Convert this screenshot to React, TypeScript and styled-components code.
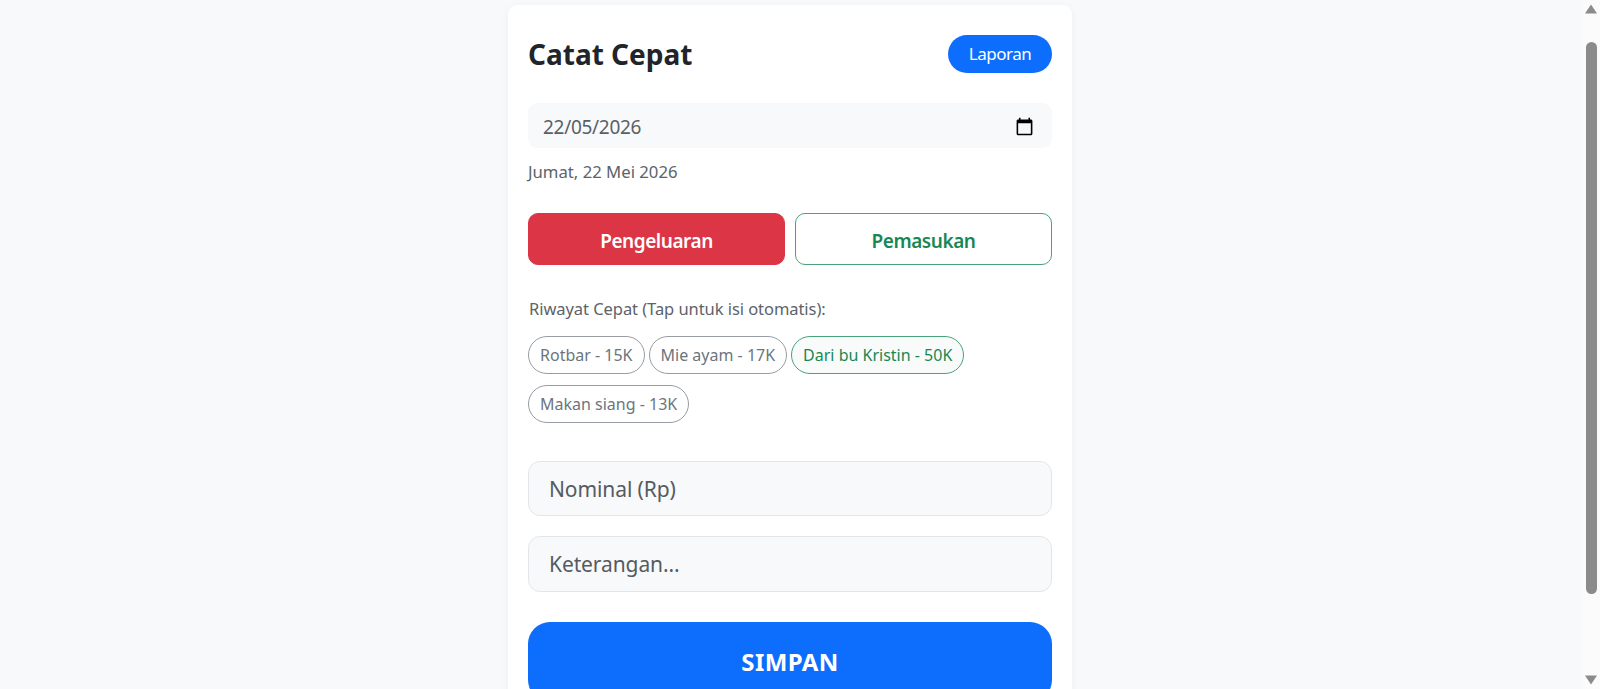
import * as React from 'react'
import styled, { createGlobalStyle } from 'styled-components'

const Global = createGlobalStyle`
  html, body {
    margin: 0;
    height: 100%;
    overflow: hidden;
    background: #f8f9fa;
    font-family: "Noto Sans", "Open Sans", sans-serif;
    color: #212529;
  }
  * { box-sizing: border-box; }
`

const Page = styled.div`
  display: flex;
  height: 100vh;
  overflow: hidden;
`

const Main = styled.main`
  flex: 1;
  display: flex;
  justify-content: center;
  padding: 5px 2px 0 0;
  overflow: hidden;
`

const Card = styled.div`
  width: 564px;
  height: 760px;
  flex: none;
  padding: 29px 20px 0;
  background: #fff;
  border-radius: 9px;
  box-shadow: 0 2px 8px rgba(0, 0, 0, 0.05);
`

const Header = styled.div`
  display: flex;
  justify-content: space-between;
  align-items: center;
  height: 39px;
  margin-bottom: 30px;
`

const Title = styled.h1`
  margin: 0;
  padding-top: 2px;
  font-size: 28px;
  line-height: 39px;
  font-weight: 700;
`

const PillButton = styled.button`
  width: 104px;
  height: 38px;
  border: 0;
  border-radius: 19px;
  background: #0d6efd;
  color: #fff;
  font: 400 17px "Noto Sans", sans-serif;
  letter-spacing: -0.5px;
`

const DateField = styled.label`
  display: flex;
  align-items: center;
  justify-content: space-between;
  height: 45px;
  padding: 2px 18px 0 15px;
  border-radius: 9px;
  background: #f8f9fa;
  color: #5a6066;
  font-size: 19px;
  letter-spacing: -0.3px;
`

const DateCaption = styled.div`
  margin: 12px 0 30px;
  font-size: 16.7px;
  line-height: 23px;
  color: #5c636a;
`

const TypeRow = styled.div`
  display: flex;
  gap: 10px;
  margin-bottom: 32px;
`

const TypeButton = styled.button<{ $active?: boolean }>`
  flex: 1;
  height: 52px;
  padding-top: 4px;
  border-radius: 10px;
  border: 1px solid ${p => (p.$active ? '#dc3545' : '#4aa27d')};
  background: ${p => (p.$active ? '#dc3545' : '#fff')};
  color: ${p => (p.$active ? '#fff' : '#198754')};
  font: 600 19px "Noto Sans", sans-serif;
  letter-spacing: -0.45px;
`

const HistoryLabel = styled.div`
  padding-left: 1px;
  font-size: 16.5px;
  line-height: 23px;
  color: #5c636a;
  letter-spacing: -0.06px;
  margin-bottom: 16px;
`

const Chips = styled.div`
  display: flex;
  flex-wrap: wrap;
  gap: 11px 4px;
  margin-bottom: 38px;
`

const Chip = styled.button<{ $income?: boolean }>`
  height: 38px;
  padding: 0 11px;
  border-radius: 19px;
  border: 1px solid ${p => (p.$income ? '#4aa27d' : '#979da3')};
  background: ${p => (p.$income ? '#f8fbf9' : '#fff')};
  color: ${p => (p.$income ? '#198754' : '#6c757d')};
  font: 400 16px "Noto Sans", sans-serif;
  white-space: nowrap;
`

const TextInput = styled.input<{ $tall?: boolean }>`
  display: block;
  width: 100%;
  height: ${p => (p.$tall ? 56 : 55)}px;
  margin-bottom: ${p => (p.$tall ? 30 : 20)}px;
  padding: 0 20px;
  border: 1px solid #e3e6e9;
  border-radius: 12px;
  background: #f8f9fa;
  font: 400 21px "Noto Sans", sans-serif;
  letter-spacing: -0.1px;
  outline: none;

  &::placeholder {
    color: #555b61;
    opacity: 1;
  }
`

const SaveButton = styled.button`
  display: block;
  width: 100%;
  height: 80px;
  padding-bottom: 2px;
  border: 0;
  border-radius: 22px;
  background: #0d6efd;
  color: #fff;
  font: 700 24px "Noto Sans", sans-serif;
  letter-spacing: 0.4px;
`

const ScrollTrack = styled.aside`
  flex: none;
  width: 18px;
  height: 100vh;
  display: flex;
  flex-direction: column;
  align-items: center;
  background: #fbfbfb;
`

const ArrowUp = styled.svg`
  flex: none;
  display: block;
  margin-top: 4px;
`

const ArrowDown = styled.svg`
  flex: none;
  display: block;
  margin-bottom: 4px;
`

const Thumb = styled.div`
  width: 11px;
  height: 552px;
  margin-top: 28px;
  border-radius: 6px;
  background: #8b8b8b;
`

const Spacer = styled.div`
  flex: 1;
`

const CalendarIcon = () => (
  <svg width="19" height="19" viewBox="0 0 24 24" fill="#000">
    <path d="M20 3h-1V1h-2v2H7V1H5v2H4c-1.1 0-2 .9-2 2v16c0 1.1.9 2 2 2h16c1.1 0 2-.9 2-2V5c0-1.1-.9-2-2-2zm0 18H4V8h16v13z" />
  </svg>
)

const App = () => (
  <Page>
    <Global />
    <Main>
      <Card>
        <Header>
          <Title>Catat Cepat</Title>
          <PillButton>Laporan</PillButton>
        </Header>
        <DateField>
          <span>22/05/2026</span>
          <CalendarIcon />
        </DateField>
        <DateCaption>Jumat, 22 Mei 2026</DateCaption>
        <TypeRow>
          <TypeButton $active>Pengeluaran</TypeButton>
          <TypeButton>Pemasukan</TypeButton>
        </TypeRow>
        <HistoryLabel>Riwayat Cepat (Tap untuk isi otomatis):</HistoryLabel>
        <Chips>
          <Chip>Rotbar - 15K</Chip>
          <Chip>Mie ayam - 17K</Chip>
          <Chip $income>Dari bu Kristin - 50K</Chip>
          <Chip>Makan siang - 13K</Chip>
        </Chips>
        <TextInput placeholder="Nominal (Rp)" />
        <TextInput $tall placeholder="Keterangan..." />
        <SaveButton>SIMPAN</SaveButton>
      </Card>
    </Main>
    <ScrollTrack>
      <ArrowUp width="12" height="10" viewBox="0 0 12 10">
        <path d="M6 0.5 L12 9.5 H0 Z" fill="#8b8b8b" />
      </ArrowUp>
      <Thumb />
      <Spacer />
      <ArrowDown width="12" height="10" viewBox="0 0 12 10">
        <path d="M0 0.5 H12 L6 9.5 Z" fill="#8b8b8b" />
      </ArrowDown>
    </ScrollTrack>
  </Page>
)

export default App
